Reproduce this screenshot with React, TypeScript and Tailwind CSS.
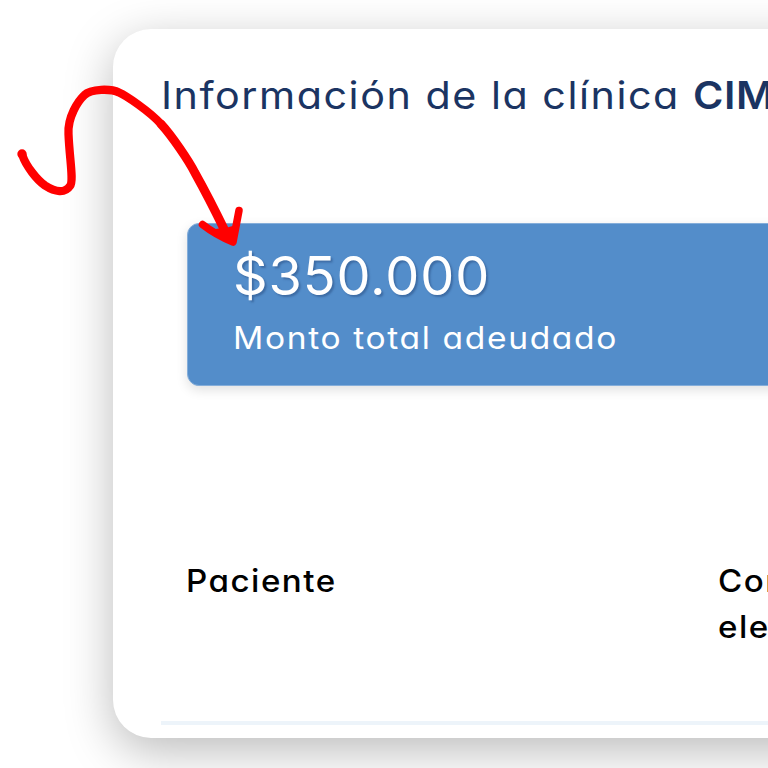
function Arrow() {
  return (
    <svg className="pointer-events-none absolute left-0 top-0 h-[260px] w-[260px]" viewBox="0 0 260 260" fill="none" stroke="#ff0000" strokeLinecap="round" strokeLinejoin="round">
      <path strokeWidth="8.3" d="M22.5 155.500 C26 166 37 180 45 185.500 C55 192 65 193.500 70 186 C74 181 69.500 159 68.500 134 C67.500 117 78 101 84.500 95 C91 88.500 111 88.500 119 92.500 C126 95.500 149 111 161 124" />
      <path strokeWidth="8.900" d="M161 124 C172 136 189 161 195 173 Q209 198 225 231" />
      <circle cx="22" cy="154" r="4.700" fill="#ff0000" stroke="none" />
      <path strokeWidth="7.500" d="M202.500 224.500 Q216 235 233 242 L239 210.500" />
      <path strokeWidth="2" fill="#ff0000" d="M216 230 L233 242 L233 227 L229 228 Z" />
    </svg>
  );
}

export default function App() {
  return (
    <main className="relative h-[768px] w-[768px] overflow-hidden bg-white pl-[113px] pt-[29px] font-['Inter','Noto_Sans',sans-serif] [font-feature-settings:'cv11','calt'_0]">
      <section className="h-[709px] w-[1100px] rounded-[38px] bg-white pl-12 pt-[37px] shadow-[0_13px_48px_rgba(0,0,0,0.27)]">
        <h1 className="h-[59px] origin-left scale-x-[1.086] whitespace-nowrap text-[38px] leading-[59px] font-normal tracking-[1.4px] text-[#1b3462]">
          Información de la clínica <strong className="font-semibold tracking-[0.6px]">CIM</strong>
        </h1>
        <div className="ml-[26px] mt-[98px] h-[163px] rounded-[12px] border border-[#85aeda] bg-[#538dca] pl-[45px] pt-[18px] text-white shadow-[0_4px_12px_rgba(0,0,0,0.12)]">
          <p className="h-[67px] whitespace-nowrap text-[54px] leading-[67px] tracking-[0.9px] [text-shadow:2px_2px_2px_rgba(30,60,110,0.4)]">$350.000</p>
          <p className="mt-1 h-[50px] origin-left scale-x-[1.083] whitespace-nowrap text-[31px] leading-[50px] tracking-[1.500px]">Monto total adeudado</p>
        </div>
        <div className="mt-[172px] grid h-[167px] grid-cols-[532px_1fr] border-b-4 border-[#edf4fa] pl-[25px] text-[31px] leading-[46px] font-medium tracking-[1.400px] text-black">
          <div className="origin-left scale-x-[1.068]">Paciente</div>
          <div className="origin-left scale-x-[1.068]">Correo<br />electrónico</div>
        </div>
      </section>
      <Arrow />
    </main>
  );
}
